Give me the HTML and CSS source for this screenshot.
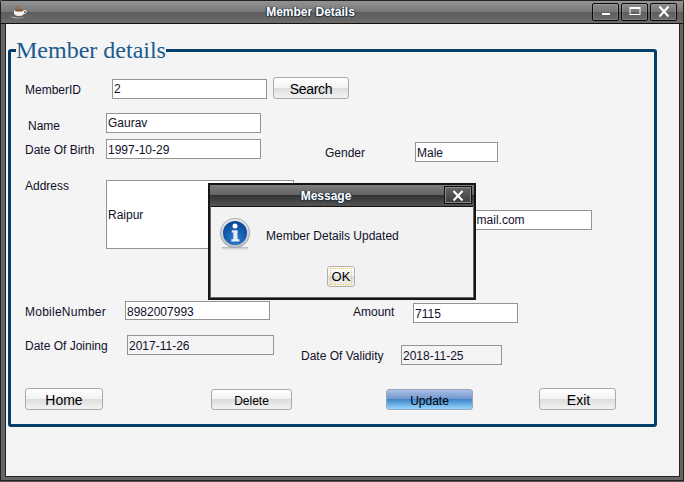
FILE: index.html
```html
<!DOCTYPE html>
<html lang="en">
<head>
<meta charset="utf-8">
<title>Member Details</title>
<link rel="stylesheet" href="styles.css">
</head>
<body>
<div class="window">
  <header class="titlebar">
    <svg class="app-icon" width="18" height="14" viewBox="0 0 18 14">
      <path d="M4 5h10v3c0 2-2 3-5 3s-5-1-5-3z" fill="#f4f4f4"/>
      <path d="M14 5.500h1.500c1.500 0 1.500 2.500-1.500 3" fill="none" stroke="#eee" stroke-width="1"/>
      <path d="M1 11c2 2 12 2.500 14 .5-1 2.500-13 2.500-14-.5z" fill="#ddd"/>
      <path d="M6 4c-1-1 1-1.500 0-3M9 4c-1-1 1-1.500 0-3" fill="none" stroke="#a05a20" stroke-width="1"/>
      <ellipse cx="9" cy="5.500" rx="4.500" ry="1" fill="#8a4a1c"/>
    </svg>
    <span class="window-title">Member Details</span>
    <div class="controls">
      <button class="ctl" aria-label="Minimize"><svg width="25" height="15" viewBox="0 0 25 15"><rect x="9" y="9" width="8" height="2" fill="#fff"/></svg></button>
      <button class="ctl" aria-label="Maximize"><svg width="25" height="15" viewBox="0 0 25 15"><rect x="8" y="3.500" width="10" height="7" fill="none" stroke="#fff" stroke-width="1"/><rect x="8" y="3" width="10" height="2" fill="#fff"/></svg></button>
      <button class="ctl" aria-label="Close"><svg width="24" height="15" viewBox="0 0 24 15"><path d="M7.500 2.500l9 10M16.500 2.500l-9 10" stroke="#fff" stroke-width="2"/></svg></button>
    </div>
  </header>
  <main class="content">
    <fieldset class="panel">
      <legend class="panel-title">Member details</legend>
      <div class="row row-1">
        <label class="label w-member">MemberID</label>
        <input class="field w-155" value="2">
        <button class="btn btn-search">Search</button>
      </div>
      <div class="row row-2">
        <label class="label w-name">Name</label>
        <input class="field w-155" value="Gaurav">
      </div>
      <div class="row row-3">
        <label class="label w-dob">Date Of Birth</label>
        <input class="field field-low w-155" value="1997-10-29">
        <label class="label w-gender">Gender</label>
        <input class="field field-low w-gender-field" value="Male">
      </div>
      <div class="row row-4">
        <label class="label w-address">Address</label>
        <div class="area">Raipur</div>
        <input class="field w-email" value="gaurav@gmail.com">
      </div>
      <div class="row row-5">
        <label class="label w-mobile">MobileNumber</label>
        <input class="field field-low w-mobile-field" value="8982007993">
        <label class="label w-amount">Amount</label>
        <input class="field field-low w-amount-field" value="7115">
      </div>
      <div class="row row-6">
        <label class="label w-join">Date Of Joining</label>
        <input class="field field-low w-join-field field-muted" value="2017-11-26">
        <label class="label w-valid">Date Of Validity</label>
        <input class="field field-low w-valid-field field-muted" value="2018-11-25">
      </div>
      <div class="row row-7">
        <button class="btn btn-home">Home</button>
        <button class="btn btn-delete">Delete</button>
        <button class="btn btn-update">Update</button>
        <button class="btn btn-exit">Exit</button>
      </div>
    </fieldset>
  </main>
  <div class="dialog">
    <div class="dialog-title">
      <span class="dialog-caption">Message</span>
      <button class="dialog-close" aria-label="Close"><svg width="24" height="15" viewBox="0 0 24 15"><path d="M7.500 3l9 9.500M16.500 3l-9 9.500" stroke="#fff" stroke-width="2"/></svg></button>
    </div>
    <div class="dialog-body">
      <div class="dialog-msg">
        <svg class="info" width="32" height="34" viewBox="0 0 32 34">
          <defs>
            <radialGradient id="ib" cx="50%" cy="75%" r="65%"><stop offset="0" stop-color="#2f7fd0"/><stop offset="1" stop-color="#0a4a98"/></radialGradient>
            <linearGradient id="ir" x1="0" y1="0" x2="0" y2="1"><stop offset="0" stop-color="#e8e8e8"/><stop offset="1" stop-color="#b8c0c8"/></linearGradient>
            <linearGradient id="is" x1="0" y1="0" x2="0" y2="1"><stop offset="0" stop-color="#b4b4b4"/><stop offset="1" stop-color="#f2f2f2"/></linearGradient>
          </defs>
          <rect x="3" y="30" width="26" height="3" fill="url(#is)"/>
          <circle cx="16" cy="16" r="14.700" fill="url(#ir)" stroke="#9aa2aa" stroke-width=".8"/>
          <circle cx="16" cy="16" r="12" fill="url(#ib)"/>
          <circle cx="16" cy="9" r="2.500" fill="#fff"/>
          <path d="M12.800 13.200h5.700v9h1.900v2.300h-8v-2.300h1.900v-6.700h-1.500z" fill="#e6edf5"/>
        </svg>
        <span class="dialog-text">Member Details Updated</span>
      </div>
      <button class="btn btn-ok"><span class="focus">OK</span></button>
    </div>
  </div>
</div>
</body>
</html>
```
FILE: styles.css
```css
* { box-sizing: border-box; }
html, body { margin: 0; padding: 0; }
body { width: 684px; height: 482px; overflow: hidden; background: #555; font-family: "Liberation Sans", Arial, sans-serif; font-size: 12px; color: #10102a; }

.window { position: relative; width: 684px; height: 481px; display: flex; flex-direction: column; background: #666; border: 1px solid #222; border-radius: 3px 3px 0 0; }
.titlebar { flex: none; height: 23px; display: flex; align-items: center; position: relative; background: linear-gradient(#939393 0, #777 50%, #5c5c5c 50%, #6c6c6c 100%); border-bottom: 1px solid #111; }
.app-icon { margin-left: 9px; }
.window-title { flex: 1; margin-left: -7px; padding-left: 8px; text-align: center; font-weight: bold; font-size: 12px; color: #fff; text-shadow: 1px 0 1px #234, -1px 0 1px #234, 0 1px 1px #234; }
.controls { display: flex; gap: 2px; margin-right: 6px; margin-top: -1px; }
.ctl { width: 27px; height: 18px; padding: 0; border: 1px solid #0c0c0c; border-radius: 2px; background: linear-gradient(#8a8a8a 0, #777 50%, #5e5e5e 50%, #6c6c6c 100%); box-shadow: inset 0 0 0 1px rgba(255,255,255,.12); display: flex; align-items: center; justify-content: center; }

.content { flex: none; width: 673px; height: 453px; margin-left: 5px; background: #f4f4f4; border-bottom: 1px solid #222; padding: 0 0 0 2px; box-shadow: -1px 0 0 #222, 1px 0 0 #222; }

.panel { margin: 12px 0 0 0; padding: 12px 0 14px 0; width: 649px; border: 3px solid #033f68; border-radius: 3px; min-width: 0; }
.panel-title { margin-left: 5px; padding: 1px 0; font-family: "Liberation Serif", "Times New Roman", serif; font-size: 24px; line-height: 27px; color: #1a5b8e; }

.row { display: flex; align-items: flex-start; padding-left: 14px; }
.label { display: block; height: 20px; line-height: 20px; flex: none; white-space: nowrap; }
.field { flex: none; height: 20px; border: 1px solid #949494; background: #fff; font: 12px "Liberation Sans", Arial, sans-serif; color: #10102a; padding: 0 1px; outline: none; }
.field-low { padding-top: 2px; }
.field-muted { background: transparent; }

.row-1 { height: 22px; }
.row-1 .label { width: 87px; height: 22px; line-height: 26px; }
.w-155 { width: 155px; }
.row-1 .field { margin-top: 2px; }
.row-2 { margin-top: 14px; padding-left: 17px; height: 20px; }
.w-name { width: 78px; margin-top: 3px; }
.row-3 { margin-top: 6px; height: 23px; }
.w-dob { width: 81px; margin-top: 1px; }
.w-gender { width: 90px; margin-left: 64px; margin-top: 4px; }
.w-gender-field { width: 83px; margin-top: 3px; }
.row-4 { margin-top: 18px; height: 69px; }
.w-address { width: 81px; margin-top: -4px; }
.area { flex: none; width: 188px; height: 69px; border: 1px solid #949494; background: #fff; padding: 0 1px; display: flex; align-items: center; }
.w-email { width: 173px; margin-left: 125px; margin-top: 30px; }
.row-5 { margin-top: 52px; height: 22px; }
.w-mobile { width: 100px; margin-top: 1px; letter-spacing: .25px; }
.w-mobile-field { width: 145px; height: 19px; }
.w-amount { width: 60px; margin-left: 83px; margin-top: 1px; }
.w-amount-field { width: 105px; margin-top: 2px; }
.row-6 { margin-top: 12px; height: 30px; }
.w-join { width: 102px; margin-top: 1px; }
.w-join-field { width: 147px; }
.w-valid { width: 100px; margin-left: 27px; margin-top: 11px; }
.w-valid-field { width: 101px; margin-top: 10px; }
.row-7 { margin-top: 23px; height: 22px; }

.btn { flex: none; height: 22px; padding: 2px 0 0; border: 1px solid #aaa; border-radius: 3px; background: linear-gradient(#fff 0, #f2f2f2 50%, #dcdcdc 50%, #f3f3f3 100%); font: 14px "Liberation Sans", Arial, sans-serif; color: #000; }
.btn-search { width: 76px; margin-left: 6px; letter-spacing: -.3px; }
.btn-home { width: 78px; }
.btn-delete { width: 81px; height: 21px; margin-left: 108px; margin-top: 1px; font-size: 12px; }
.btn-update { width: 87px; height: 21px; margin-left: 94px; margin-top: 1px; font-size: 12px; border-color: #9aa8ba; background: linear-gradient(#a9bfe6 0, #6e94cc 50%, #3f87cb 50%, #97d6ff 100%); }
.btn-exit { width: 77px; margin-left: 66px; padding-left: 2px; }

.dialog { position: absolute; left: 207px; top: 182px; width: 268px; height: 117px; border: 2px solid #151515; background: #666; padding: 0 1px 1px; display: flex; flex-direction: column; }
.dialog-title { flex: none; height: 21px; display: flex; align-items: center; justify-content: center; position: relative; margin: 0 -1px; background: linear-gradient(#7d7d7d 0, #626262 50%, #333 50%, #555 100%); }
.dialog-caption { font-weight: bold; color: #fff; padding-right: 32px; text-shadow: 1px 0 1px #234, -1px 0 1px #234, 0 1px 1px #234; }
.dialog-close { position: absolute; right: 2px; top: 1px; width: 28px; height: 18px; padding: 0; border: 1px solid #111; background: linear-gradient(#666, #3c3c3c); box-shadow: inset 0 0 0 1px #888; display: flex; align-items: center; justify-content: center; }
.dialog-body { flex: 1; background: #f2f2f2; display: flex; flex-direction: column; align-items: center; border-top: 1px solid #111; }
.dialog-msg { align-self: stretch; display: flex; align-items: flex-start; height: 59px; padding: 10px 0 0 8px; }
.info { flex: none; }
.dialog-text { margin-left: 15px; margin-top: 12px; line-height: 14px; }
.btn-ok { width: 28px; height: 21px; margin-right: 2px; padding: 0; font-size: 13px; border-color: #b0b0b0; display: flex; align-items: center; justify-content: center; }
.focus { display: block; width: 22px; height: 17px; line-height: 16px; border: 1px dotted #f5c542; }
```
